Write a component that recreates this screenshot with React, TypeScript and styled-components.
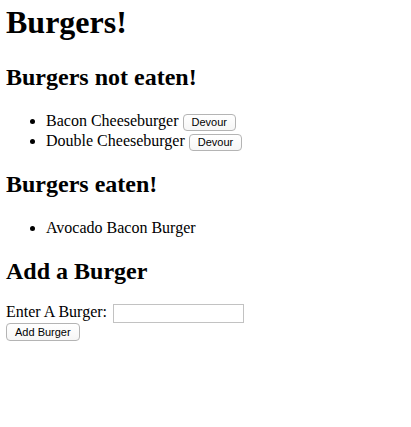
import React from "react";
import styled, { createGlobalStyle } from "styled-components";

const GlobalStyle = createGlobalStyle`
  body {
    margin: 0 6px;
    background: #fff;
    color: #000;
    font-family: "Liberation Serif", "Times New Roman", serif;
    font-size: 16px;
  }
`;

const Page = styled.div`
  padding-top: 4px;
`;

const Title = styled.h1`
  font-size: 32px;
  font-weight: bold;
  line-height: 37px;
  margin: 0 0 22px;
`;

const SectionTitle = styled.h2`
  font-size: 24px;
  font-weight: bold;
  line-height: 28px;
  margin: 0;
`;

const BurgerList = styled.ul`
  margin: 20px 0 19px;
  padding-left: 40px;
`;

const BurgerItem = styled.li`
  line-height: 20px;
`;

const SmallButton = styled.button`
  font-family: "Liberation Sans", Arial, sans-serif;
  font-size: 11px;
  line-height: 12px;
  color: #000;
  background: linear-gradient(#ffffff, #f6f6f6);
  border: 1px solid #b4b4b4;
  border-radius: 4px;
  padding: 1px 8px 2px;
  margin: 0;
`;

const AddButton = styled(SmallButton)`
  display: block;
  padding: 2px 8px;
`;

const BurgerForm = styled.form`
  margin-top: 17px;
`;

const FormRow = styled.div`
  line-height: 20px;
  height: 21px;
`;

const BurgerInput = styled.input`
  box-sizing: border-box;
  width: 131px;
  height: 19px;
  font-family: "Liberation Sans", Arial, sans-serif;
  font-size: 12px;
  line-height: 15px;
  border: 1px solid #c2c2c2;
  padding: 1px 2px;
  margin: 0 0 0 6px;
  vertical-align: baseline;
`;

export default function App() {
  const notEaten = ["Bacon Cheeseburger", "Double Cheeseburger"];
  const eaten = ["Avocado Bacon Burger"];
  return (
    <Page>
      <GlobalStyle />
      <Title>Burgers!</Title>
      <SectionTitle>Burgers not eaten!</SectionTitle>
      <BurgerList>
        {notEaten.map((b) => (
          <BurgerItem key={b}>
            {b} <SmallButton type="button">Devour</SmallButton>
          </BurgerItem>
        ))}
      </BurgerList>
      <SectionTitle>Burgers eaten!</SectionTitle>
      <BurgerList>
        {eaten.map((b) => (
          <BurgerItem key={b}>{b}</BurgerItem>
        ))}
      </BurgerList>
      <SectionTitle>Add a Burger</SectionTitle>
      <BurgerForm onSubmit={(e) => e.preventDefault()}>
        <FormRow>
          <label htmlFor="burger">Enter A Burger:</label>
          <BurgerInput id="burger" type="text" />
        </FormRow>
        <AddButton type="submit">Add Burger</AddButton>
      </BurgerForm>
    </Page>
  );
}
